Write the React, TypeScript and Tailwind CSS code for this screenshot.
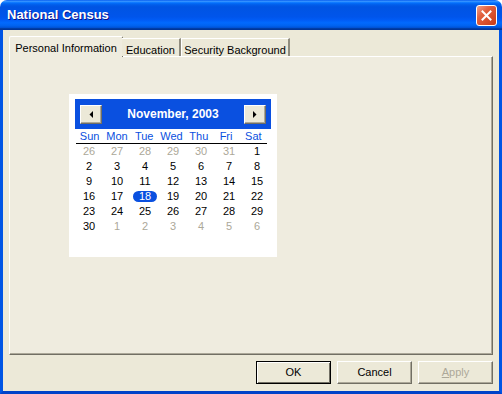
import React from 'react';

const font = { fontFamily: '"Liberation Sans", Arial, sans-serif' };

type Day = { n: number; muted?: boolean };

const weeks: Day[][] = [
  [{ n: 26, muted: true }, { n: 27, muted: true }, { n: 28, muted: true }, { n: 29, muted: true }, { n: 30, muted: true }, { n: 31, muted: true }, { n: 1 }],
  [2, 3, 4, 5, 6, 7, 8].map((n) => ({ n })),
  [9, 10, 11, 12, 13, 14, 15].map((n) => ({ n })),
  [16, 17, 18, 19, 20, 21, 22].map((n) => ({ n })),
  [23, 24, 25, 26, 27, 28, 29].map((n) => ({ n })),
  [{ n: 30 }, { n: 1, muted: true }, { n: 2, muted: true }, { n: 3, muted: true }, { n: 4, muted: true }, { n: 5, muted: true }, { n: 6, muted: true }],
];

const dayNames = ['Sun', 'Mon', 'Tue', 'Wed', 'Thu', 'Fri', 'Sat'];

const NavButton: React.FC<{ dir: 'left' | 'right' }> = ({ dir }) => (
  <div className="w-[22px] h-[19px] bg-[#ece9d8] border border-t-white border-l-white border-r-[#716f64] border-b-[#716f64] flex items-center justify-center shadow-[inset_-1px_-1px_0_#aca899]">
    <svg width="4" height="7" viewBox="0 0 4 7">
      {dir === 'left' ? <polygon points="4,0 4,7 0.5,3.5" fill="#000" /> : <polygon points="0,0 0,7 3.5,3.5" fill="#000" />}
    </svg>
  </div>
);

const Calendar: React.FC = () => (
  <div className="w-[208px] h-[163px] bg-white pt-[5px] px-[6px]">
    {/* month header */}
    <div className="h-[30px] bg-[#0a50e0] flex items-center justify-between px-[5px]">
      <NavButton dir="left" />
      <span className="text-white font-bold text-[12px]">November, 2003</span>
      <NavButton dir="right" />
    </div>
    {/* day names */}
    <div className="grid grid-cols-7 h-[15px] border-b border-black mx-[1px] mr-[4px] pt-[1px]">
      {dayNames.map((d) => (
        <span key={d} className="text-center text-[11px] leading-[13px] text-[#0a50e0]">{d}</span>
      ))}
    </div>
    {/* days */}
    <div className="flex flex-col">
      {weeks.map((w, i) => (
        <div key={i} className="grid grid-cols-7 h-[15px]">
          {w.map((d, j) => (
            <div key={j} className="flex items-center justify-center">
              {!d.muted && d.n === 18 ? (
                <span className="w-[24px] h-[11px] rounded-full bg-[#0a50e0] text-white text-[11px] leading-[11px] text-center">18</span>
              ) : (
                <span className={`text-[11px] leading-[15px] ${d.muted ? 'text-[#aca899]' : 'text-black'}`}>{d.n}</span>
              )}
            </div>
          ))}
        </div>
      ))}
    </div>
  </div>
);

const Button: React.FC<{ label: React.ReactNode; primary?: boolean; disabled?: boolean }> = ({ label, primary, disabled }) => (
  <div
    className={`w-[75px] h-[23px] bg-[#ece9d8] flex items-center justify-center text-[11px] ${
      primary ? 'border border-black shadow-[inset_1px_1px_0_#fff,inset_-1px_-1px_0_#716f64]' : 'border border-t-white border-l-white border-r-[#716f64] border-b-[#716f64] shadow-[inset_-1px_-1px_0_#aca899]'
    } ${disabled ? 'text-[#aca899]' : 'text-black'}`}
  >
    {label}
  </div>
);

export default function App() {
  return (
    <div className="w-[502px] h-[394px] flex flex-col bg-white" style={font}>
      {/* title bar */}
      <div className="h-[30px] rounded-t-[7px] bg-[linear-gradient(to_bottom,#0058ee_0%,#3a93ff_4%,#288eff_6%,#127dff_8%,#036ffc_10%,#0262ee_14%,#0057e5_20%,#0054e3_24%,#0055eb_56%,#005bf5_66%,#026afe_76%,#0062ef_86%,#0052d6_92%,#0040ab_94%,#003092_100%)] flex items-center justify-between pl-[7px] pr-[5px]">
        <span className="text-white font-bold text-[13px] [text-shadow:1px_1px_#0f1089]">National Census</span>
        <div className="w-[21px] h-[21px] rounded-[3px] border border-white bg-[linear-gradient(135deg,#f0a08a_0%,#e2613f_35%,#c93b17_100%)] flex items-center justify-center">
          <svg width="11" height="11" viewBox="0 0 11 11">
            <path d="M1.5 1.5 L9.5 9.5 M9.5 1.5 L1.5 9.5" stroke="#fff" strokeWidth="2" strokeLinecap="square" />
          </svg>
        </div>
      </div>
      {/* window body */}
      <div className="flex-1 bg-[#ece9d8] border-x-[3px] border-b-[3px] border-x-[#0055e5] border-b-[#0042c8] flex flex-col px-[6px] pt-[6px]">
        {/* tab strip */}
        <div className="flex items-end h-[21px] text-[11px] text-black relative z-10">
          <div className="h-[21px] w-[114px] bg-[#efecdf] border-t border-l border-white border-r border-r-[#716f64] rounded-t-[2px] flex items-start justify-center pt-[3px]">
            Personal Information
          </div>
          <div className="h-[18px] w-[59px] bg-[#ece9d8] border-t border-white border-r-2 border-r-[#908d7f] flex items-start justify-center pt-[3px] mb-[1px] -ml-px">
            Education
          </div>
          <div className="h-[18px] w-[109px] bg-[#ece9d8] border-t border-l border-white border-r-2 border-r-[#908d7f] flex items-start justify-center pt-[3px] mb-[1px]">
            Security Background
          </div>
        </div>
        {/* tab panel */}
        <div className="h-[299px] -mt-px bg-[#efecdf] border-t border-l border-white border-r border-b border-r-[#716f64] border-b-[#716f64] shadow-[inset_-1px_-1px_0_#aca899] pl-[59px] pt-[37px]">
          <Calendar />
        </div>
        {/* buttons */}
        <div className="flex justify-end gap-[6px] mt-[6px]">
          <Button label="OK" primary />
          <Button label="Cancel" />
          <Button label={<span><span className="underline">A</span>pply</span>} disabled />
        </div>
      </div>
    </div>
  );
}
